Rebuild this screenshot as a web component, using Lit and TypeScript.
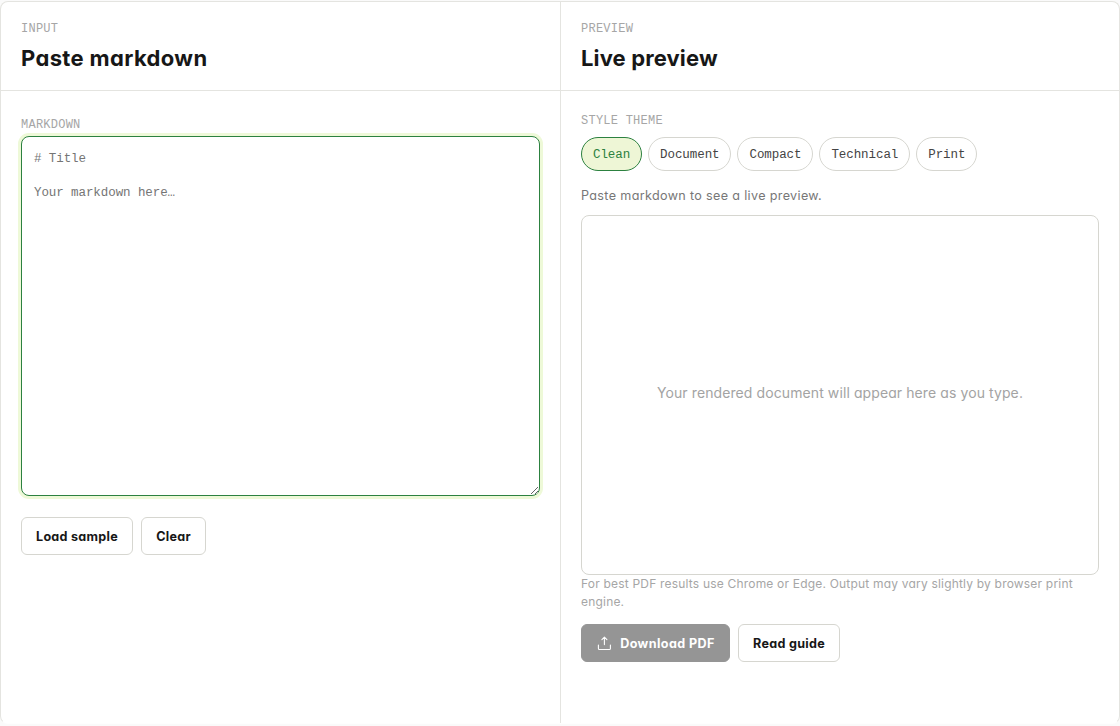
import { LitElement, html, css } from "lit";
import { customElement, state } from "lit/decorators.js";

@customElement("app-root")
export class AppRoot extends LitElement {
  static styles = css`
    :host {
      display: block;
      box-sizing: border-box;
      height: 726px;
      padding: 1px 0 2px;
      background: #fafafa;
      color: #171717;
      font-family: Inter, "Liberation Sans", sans-serif;
      font-feature-settings: "cv11";
    }
    * { box-sizing: border-box; }
    .shell {
      display: grid;
      grid-template-columns: 560px 1fr;
      height: 723px;
      border: 1px solid #e4e4e0;
      border-bottom-color: #fefefe;
      border-radius: 8px;
      background: #fff;
      overflow: hidden;
    }
    .pane { min-width: 0; }
    .left { border-right: 1px solid #e4e4e0; }
    .head {
      height: 89px;
      padding: 20px 20px 0;
      border-bottom: 1px solid #e4e4e0;
    }
    .label {
      display: block;
      font: 12px/14px "Liberation Mono", monospace;
      letter-spacing: 0.24px;
      color: #a6a6a6;
    }
    h2 {
      margin: 8px 0 0;
      font-size: 22px;
      line-height: 28px;
      font-weight: 700;
      letter-spacing: 0.13px;
    }
    .left h2 { letter-spacing: 0.36px; }
    .body { padding: 27px 20px 0; }
    .right .body { padding-top: 23px; }
    textarea {
      display: block;
      width: 519px;
      height: 360px;
      margin: 4px 0 0;
      padding: 14px 12px 10px;
      border: 1px solid #2c8140;
      border-radius: 8px;
      outline: none;
      box-shadow: 0 0 0 3px #eef9d8;
      resize: vertical;
      font: 12.5px/17px "Liberation Mono", monospace;
      letter-spacing: -0.08px;
      background: #fff;
    }
    textarea::placeholder { color: #757575; }
    .row { display: flex; gap: 8px; }
    .left .row { margin-top: 21px; }
    .btn {
      display: flex;
      align-items: center;
      justify-content: center;
      height: 38px;
      padding: 2px 0 0;
      border: 1px solid #d6d6d0;
      border-radius: 6px;
      background: #fff;
      color: #171717;
      font: 700 12.6px/18px Inter, sans-serif;
      font-feature-settings: "cv11";
      letter-spacing: 0.27px;
      white-space: nowrap;
    }
    .load { width: 112px; }
    .clear { width: 65px; }
    .guide { width: 102px; }
    .primary {
      width: 149px;
      border-color: #959595;
      background: #959595;
      color: #fff;
      gap: 8px;
      letter-spacing: 0.4px;
    }
    .primary svg { margin-bottom: 2px; }
    .chips { display: flex; gap: 6px; margin-top: 9px; }
    .chip {
      height: 34px;
      padding: 1px 11px 0;
      border: 1px solid #d6d6d0;
      border-radius: 17px;
      background: #fff;
      color: #444;
      font: 12.5px/16px "Liberation Mono", monospace;
      letter-spacing: -0.08px;
    }
    .chip.on { border-color: #2c8140; background: #eef6d6; color: #2c8140; }
    .hint {
      margin: 15px 0 0;
      font-size: 12.6px;
      line-height: 20px;
      letter-spacing: 0.34px;
      color: #777;
    }
    .preview {
      display: grid;
      place-items: center;
      height: 360px;
      margin-top: 9px;
      padding-bottom: 5px;
      border: 1px solid #d6d6d0;
      border-radius: 8px;
      font-size: 14px;
      letter-spacing: 0.095px;
      color: #a3a3a3;
    }
    .note {
      margin: 0;
      font-size: 12px;
      line-height: 18px;
      letter-spacing: 0.195px;
      color: #a6a6a6;
    }
    .right .row { margin-top: 13px; }
  `;

  @state() private theme = "Clean";
  private themes = ["Clean", "Document", "Compact", "Technical", "Print"];

  render() {
    return html`
      <main class="shell">
        <section class="pane left">
          <header class="head">
            <span class="label">INPUT</span>
            <h2>Paste markdown</h2>
          </header>
          <div class="body">
            <label class="label" for="source">MARKDOWN</label>
            <textarea id="source" spellcheck="false" placeholder=${"# Title\n\nYour markdown here…"}></textarea>
            <div class="row">
              <button class="btn load">Load sample</button>
              <button class="btn clear">Clear</button>
            </div>
          </div>
        </section>
        <section class="pane right">
          <header class="head">
            <span class="label">PREVIEW</span>
            <h2>Live preview</h2>
          </header>
          <div class="body">
            <span class="label">STYLE THEME</span>
            <div class="chips">
              ${this.themes.map(
                (t) => html`<button class="chip ${t === this.theme ? "on" : ""}" @click=${() => (this.theme = t)}>${t}</button>`
              )}
            </div>
            <p class="hint">Paste markdown to see a live preview.</p>
            <div class="preview"><span>Your rendered document will appear here as you type.</span></div>
            <p class="note">For best PDF results use Chrome or Edge. Output may vary slightly by browser print engine.</p>
            <div class="row">
              <button class="btn primary">
                <svg width="16" height="16" viewBox="0 0 16 16" fill="none" stroke="#fff" stroke-width="1.1" stroke-linecap="round" stroke-linejoin="round">
                  <path d="M2.4 10v3.4q0 1.1 1.1 1.1h9.8q1.1 0 1.1-1.1V10M8.4 9.6V2.2M5.9 4.6 8.4 2.2l2.5 2.4" />
                </svg>
                Download PDF
              </button>
              <button class="btn guide">Read guide</button>
            </div>
          </div>
        </section>
      </main>
    `;
  }
}
